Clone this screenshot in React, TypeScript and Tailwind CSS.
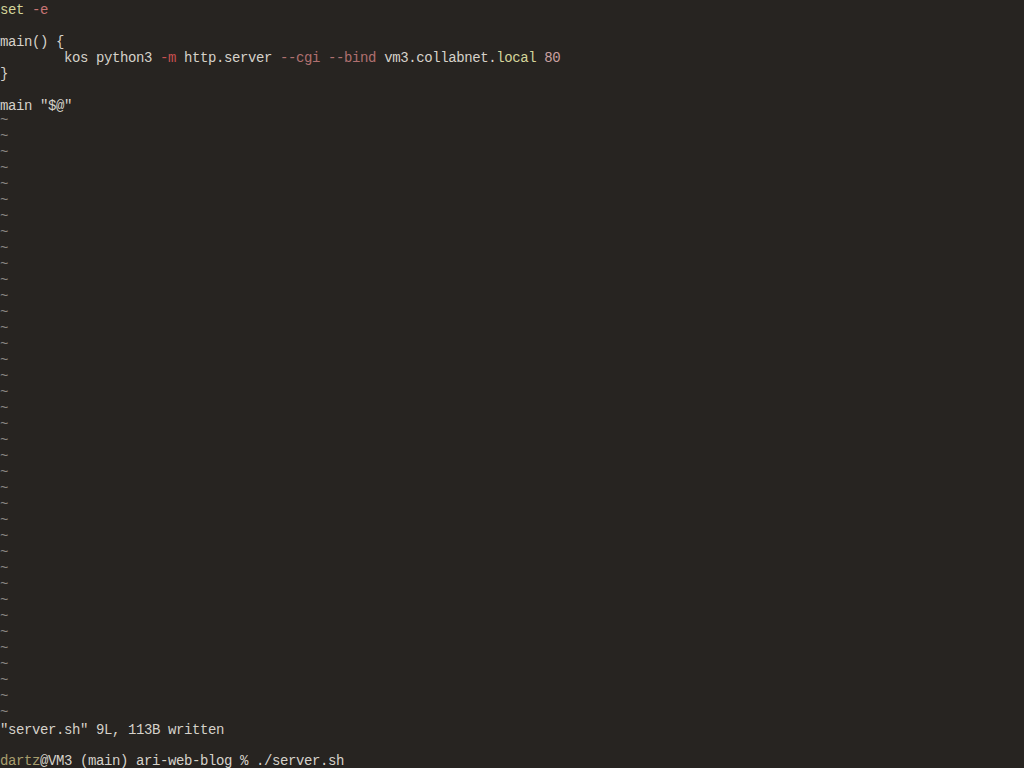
import type { ReactNode } from "react";

const c = {
  text: "text-[#d6d2ca]",
  kw: "text-[#d4d49a]",
  flag: "text-[#c87474]",
  opt: "text-[#b07070]",
  num: "text-[#caa0a0]",
  tilde: "text-[#8c8a86]",
  user: "text-[#a89e6e]",
};

function Line({ children }: { children?: ReactNode }) {
  return <div className="h-4 leading-4 whitespace-pre">{children ?? " "}</div>;
}

export default function App() {
  const tildes = Array.from({ length: 38 }, (_, i) => i);

  return (
    <div
      className={`h-[768px] w-[1024px] overflow-hidden bg-[#272421] pt-[2px] ${c.text} text-[14px] tracking-[-0.4px]`}
      style={{ fontFamily: '"Liberation Mono", "DejaVu Sans Mono", monospace' }}
    >
      <Line>
        <span className={c.kw}>set</span> <span className={c.flag}>-e</span>
      </Line>
      <Line />
      <Line>main() {"{"}</Line>
      <Line>
        {"        kos python3 "}
        <span className="text-[#c85050]">-m</span>
        {" http.server "}
        <span className={c.opt}>--cgi</span> <span className={c.opt}>--bind</span>
        {" vm3.collabnet."}
        <span className={c.kw}>local</span> <span className={c.num}>80</span>
      </Line>
      <Line>{"}"}</Line>
      <Line />
      <Line>main "$@"</Line>
      {tildes.map((i) => (
        <div key={i} className={`h-4 leading-[12px] ${c.tilde}`}>
          ~
        </div>
      ))}
      <Line>"server.sh" 9L, 113B written</Line>
      <Line />
      <div className="h-[14px] leading-[14px] whitespace-pre">
        <span className={c.user}>dartz</span>@VM3 (main) ari-web-blog % ./server.sh
      </div>
    </div>
  );
}
